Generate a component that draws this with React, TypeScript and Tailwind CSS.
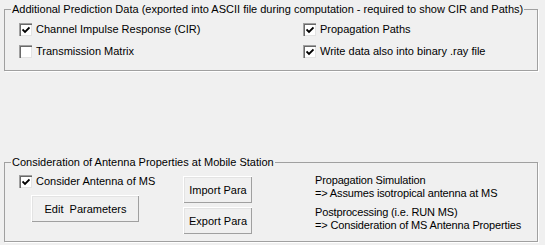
import React from 'react'

const FONT = { fontFamily: '"Liberation Sans", Arial, sans-serif' }

function Check({ checked }: { checked: boolean }) {
  return (
    <span className="relative inline-block w-[13px] h-[13px] shrink-0 bg-white border-t border-l border-[#a0a0a0] border-b-white border-r-white shadow-[inset_1px_1px_0_#696969,inset_-1px_-1px_0_#e3e3e3]">
      {checked && (
        <svg className="absolute left-[2px] top-[2px]" width="8" height="8" viewBox="0 0 8 8">
          <path d="M0.5 3.5 L3 6 L7.5 1.5" fill="none" stroke="#000" strokeWidth="1.8" />
        </svg>
      )}
    </span>
  )
}

function CheckRow({ checked, label }: { checked: boolean; label: string }) {
  return (
    <label className="flex items-center gap-[4px] h-[21px]">
      <Check checked={checked} />
      <span>{label}</span>
    </label>
  )
}

function Btn({ label, className }: { label: string; className: string }) {
  return (
    <button
      className={`flex items-center justify-center bg-[#f0f0f0] text-black border-t border-l border-white border-b-[#696969] border-r-[#696969] shadow-[inset_-1px_-1px_0_#a0a0a0,inset_1px_1px_0_#e3e3e3] ${className}`}
    >
      {label}
    </button>
  )
}

export default function App() {
  return (
    <div className="w-[545px] h-[245px] bg-[#f0f0f0] text-black text-[11px] leading-[13px] overflow-hidden" style={FONT}>
      {/* Additional Prediction Data */}
      <fieldset className="ml-[4px] mt-[3px] w-[534px] h-[68px] border border-[#a0a0a0] shadow-[1px_1px_0_#fff]">
        <legend className="ml-[6px] px-[1px]">
          Additional Prediction Data (exported into ASCII file during computation - required to show CIR and Paths)
        </legend>
        <div className="grid grid-cols-[284px_1fr] pl-[14px] pt-[3px]">
          <div>
            <CheckRow checked label="Channel Impulse Response (CIR)" />
            <div className="mt-[1px]">
              <CheckRow checked={false} label="Transmission Matrix" />
            </div>
          </div>
          <div>
            <CheckRow checked label="Propagation Paths" />
            <div className="mt-[1px]">
              <CheckRow checked label="Write data also into binary .ray file" />
            </div>
          </div>
        </div>
      </fieldset>

      {/* Consideration of Antenna Properties */}
      <fieldset className="ml-[4px] mt-[85px] w-[534px] h-[86px] border border-[#a0a0a0] shadow-[1px_1px_0_#fff]">
        <legend className="ml-[6px] px-[1px]">Consideration of Antenna Properties at Mobile Station</legend>
        <div className="flex pl-[14px] pt-[2px]">
          <div className="w-[164px]">
            <CheckRow checked label="Consider Antenna of MS" />
            <Btn label="Edit  Parameters" className="ml-[12px] mt-[3px] w-[108px] h-[27px] whitespace-pre" />
          </div>
          <div className="w-[132px] pt-[5px]">
            <Btn label="Import Para" className="w-[69px] h-[27px]" />
            <Btn label="Export Para" className="w-[69px] h-[27px] mt-[4px]" />
          </div>
          <div className="pt-[3px] leading-[13px] tracking-[-0.15px]">
            <div>Propagation Simulation</div>
            <div>=&gt; Assumes isotropical antenna at MS</div>
            <div className="mt-[6px]">Postprocessing (i.e. RUN MS)</div>
            <div>=&gt; Consideration of MS Antenna Properties</div>
          </div>
        </div>
      </fieldset>
    </div>
  )
}
